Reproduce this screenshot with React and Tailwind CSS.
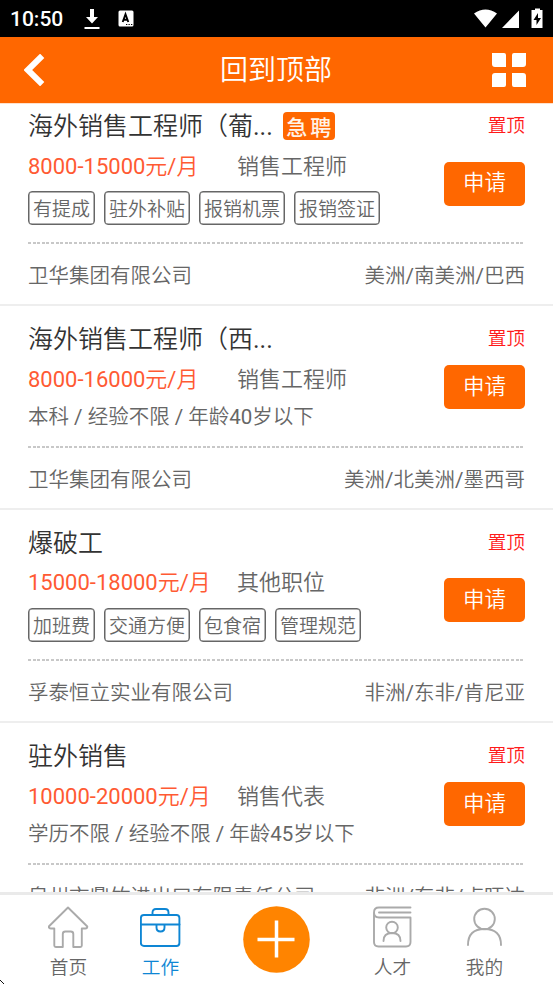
const FONT =
  "font-[Roboto,'Noto_Sans_CJK_SC_DemiLight','Noto_Sans_CJK_SC',sans-serif]";

const jobs = [
  {
    title: '海外销售工程师（葡...',
    urgent: true,
    pay: '8000-15000元/月',
    role: '销售工程师',
    tags: ['有提成', '驻外补贴', '报销机票', '报销签证'],
    company: '卫华集团有限公司',
    place: '美洲/南美洲/巴西',
  },
  {
    title: '海外销售工程师（西...',
    pay: '8000-16000元/月',
    role: '销售工程师',
    terms: '本科 / 经验不限 / 年龄40岁以下',
    company: '卫华集团有限公司',
    place: '美洲/北美洲/墨西哥',
  },
  {
    title: '爆破工',
    pay: '15000-18000元/月',
    role: '其他职位',
    tags: ['加班费', '交通方便', '包食宿', '管理规范'],
    company: '孚泰恒立实业有限公司',
    place: '非洲/东非/肯尼亚',
  },
  {
    title: '驻外销售',
    pay: '10000-20000元/月',
    role: '销售代表',
    terms: '学历不限 / 经验不限 / 年龄45岁以下',
    company: '泉州市鼎竹进出口有限责任公司',
    place: '非洲/东非/卢旺达',
  },
];

function StatusBar() {
  return (
    <div className="flex h-[37px] shrink-0 items-center bg-black pl-[10px] text-white">
      <span className="w-[74px] pt-[2px] text-[21px] font-medium leading-none">10:50</span>
      <svg className="h-[22px] w-[16px]" viewBox="0 0 16 22" fill="#fff">
        <path d="M6 1h4v8h4l-6 6.500-6-6.500h4zM0.500 19h15v2H0.500z" />
      </svg>
      <svg className="ml-[18px] h-[17px] w-[16px]" viewBox="0 0 16 17">
        <rect x="0.500" y="0.500" width="15" height="16" rx="1.500" fill="#fff" />
        <path d="M4.700 12 7.500 4.300 10.300 12M5.600 9.700h3.800" fill="none" stroke="#000" strokeWidth="1.900" />
        <path d="M8 14.500h1.300M10.500 14.500h1.300M13 14.500h1.300" stroke="#000" strokeWidth="1.200" />
      </svg>
      <svg className="ml-auto h-[22px] w-[80px]" viewBox="0 0 80 22" fill="#fff">
        <path d="M1 5.500Q12.500-2.500 24 5.500L12.500 19.500zM29 20 46 2.500V20z" />
        <path d="M62 0.500h5V2h2.500v18H58.500V2H62z" />
        <path d="M65 5l-4.500 7h3v5l4.500-7h-3z" fill="#000" />
      </svg>
    </div>
  );
}

function Header() {
  return (
    <header className="flex h-[66px] shrink-0 items-center justify-between bg-[#ff6700] px-6 text-white">
      <svg className="h-8 w-[36px]" viewBox="0 0 36 32" fill="none" stroke="#fff" strokeWidth="6">
        <path d="M18.200 1.800 3.800 16 18.200 30.200" />
      </svg>
      <h1 className="ml-px pt-[2px] text-[28px] leading-none">回到顶部</h1>
      <svg className="mr-[2px] h-[36px] w-[36px]" viewBox="0 0 36 36" fill="#fff">
        <path d="M1 1h12q2 0 2 2v12H4q-3 0-3-3zM21 3q0-2 2-2h12v11q0 3-3 3H21zM4 21h11v12q0 2-2 2H1V24q0-3 3-3zM21 21h11q3 0 3 3v11H23q-2 0-2-2z" />
      </svg>
    </header>
  );
}

function Job({ job }) {
  return (
    <article
      className={`shrink-0 border-b-2 border-[#eeeeee] px-7 ${job.tags ? 'h-[213.300px]' : 'h-[203.500px]'}`}
    >
      <div className="flex h-[53px] items-center pt-[14px]">
        <h2 className="text-[25px] leading-none text-[#333]">{job.title}</h2>
        {job.urgent && (
          <span className="-mt-[2px] ml-[10px] flex h-7 w-[52px] items-center justify-center gap-[3px] rounded-[4px] bg-[#ff6700] pt-px font-['Noto_Sans_CJK_SC',sans-serif] text-[21px] font-medium leading-none text-[#fff3e8]">
            <span>急</span>
            <span>聘</span>
          </span>
        )}
        <span className="ml-auto text-[18.700px] leading-none text-[#ff1a1a]">置顶</span>
      </div>
      <div className="flex h-[78px] justify-between">
        <div>
          <div className="flex h-[41px] items-center text-[22px] leading-none">
            <span className="w-[209px] text-[#ff5a33]">{job.pay}</span>
            <span className="text-[#666]">{job.role}</span>
          </div>
          {job.tags ? (
            <div className="flex gap-[9px] pt-1">
              {job.tags.map((tag) => (
                <span
                  key={tag}
                  className="flex h-[34px] items-center rounded-[4px] border border-[#666] px-1 pt-[3px] text-[19px] leading-none text-[#666] ring-[0.500px] ring-inset ring-[#666]"
                >
                  {tag}
                </span>
              ))}
            </div>
          ) : (
            <p className="pt-[7px] text-[20.500px] leading-none text-[#666]">{job.terms}</p>
          )}
        </div>
        <button
          className={`h-[44px] w-[81px] rounded-[5px] bg-[#ff6700] pb-px text-[21.500px] leading-none text-white ${
            job.tags ? 'mt-[15.500px]' : 'mt-[6px]'
          }`}
        >
          申请
        </button>
      </div>
      <div
        className={`h-[2px] bg-[repeating-linear-gradient(90deg,#c8c8c8_0_3px,#fff_3px_4.600px)] ${
          job.tags ? 'mt-[18px]' : 'mt-[9px]'
        }`}
      />
      <div className="flex h-[60px] items-center justify-between pt-[4px] text-[20.500px] leading-none text-[#666]">
        <span>{job.company}</span>
        <span>{job.place}</span>
      </div>
    </article>
  );
}

function Tab({ label, active, children }) {
  return (
    <div className={`flex flex-col items-center ${active ? 'text-[#0e86d4]' : 'text-[#666]'}`}>
      <svg
        className={`h-[42px] w-[42px] ${active ? 'text-[#0e86d4]' : 'text-[#aaa]'}`}
        viewBox="0 0 42 42"
        fill="none"
        stroke="currentColor"
        strokeWidth="1.900"
        strokeLinejoin="round"
        strokeLinecap="round"
      >
        {children}
      </svg>
      <span className="mt-[11px] text-[18.700px] leading-none">{label}</span>
    </div>
  );
}

function TabBar() {
  return (
    <nav className="relative grid h-[92px] shrink-0 grid-cols-[92px_92px_140px_92px_92px] justify-center border-t-[3px] border-[#eaeaea] bg-white pt-[11px]">
      <Tab label="首页">
        <path d="M20 1.500 0.800 20.500q0 2 2 2h3.500v17q0 1.500 1.500 1.500h7V28q0-2.500 2.500-2.500h5.500q2.500 0 2.500 2.500v13h7q1.500 0 1.500-1.500v-17h3.500q2 0 2-2z" />
      </Tab>
      <Tab label="工作" active>
        <rect x="0.900" y="9" width="38.500" height="31" rx="3" />
        <path d="M12.500 9V6.500Q12.500 3 16 3h9q3.500 0 3.500 3.500V9M1 18.500h38.500M16.500 18.500v3q0 4 4 4t4-4v-3" />
      </Tab>
      <div className="flex justify-center">
        <svg className="-mt-px h-[68px] w-[68px]" viewBox="0 0 68 68">
          <circle cx="33.500" cy="34.500" r="33.300" fill="#ff8400" />
          <path d="M14.500 34.500h37M33.500 15.500v37" stroke="#fff" strokeWidth="3.500" />
        </svg>
      </div>
      <Tab label="人才">
        <path d="M38.500 1.500H7Q2 1.500 2 6.500V36q0 4.500 4.500 4.500H34q4.500 0 4.500-4.500V11.500H7q-5 0-5-5M38.500 6.500H7" />
        <circle cx="20" cy="21.500" r="5.800" />
        <path d="M11.500 35q0-8 8.500-8t8.500 8" />
      </Tab>
      <Tab label="我的">
        <circle cx="20.500" cy="13" r="10.300" />
        <path d="M4 39q0-16 16.500-16t16.500 16" />
      </Tab>
      <svg className="absolute bottom-0 left-0 h-1 w-1" viewBox="0 0 4 4" fill="#111">
        <path d="M0 0h1v1H0zM1 1h1v1H1zM2 2h1v1H2zM3 3h1v1H3z" />
      </svg>
    </nav>
  );
}

export default function App() {
  return (
    <div className={`${FONT} flex h-[984px] w-[553px] flex-col overflow-hidden bg-white`}>
      <StatusBar />
      <Header />
      <main className="min-h-0 flex-1 overflow-hidden border-t border-[#ffe1cc]">
        <div className="-mt-[11px] flex flex-col">
          {jobs.map((job, i) => (
            <Job key={i} job={job} />
          ))}
        </div>
      </main>
      <TabBar />
    </div>
  );
}
